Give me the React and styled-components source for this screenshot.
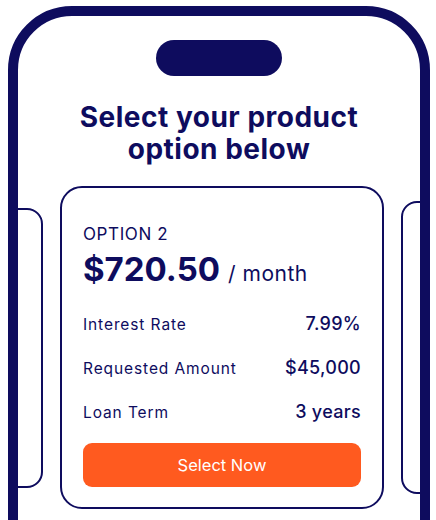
import styled, { createGlobalStyle } from "styled-components";

const navy = "#0e0c5e";
const orange = "#ff5a1f";

const GlobalStyle = createGlobalStyle`
    html, body {
        margin: 0;
        padding: 0;
        background: #fff;
        overflow: hidden;
    }
    * {
        box-sizing: border-box;
    }
`

const Page = styled.div`
    height: 520px;
    overflow: hidden;
    padding: 6px 6px 0 8px;
    font-family: Inter, "Noto Sans", sans-serif;
    color: ${navy};
`

const Phone = styled.div`
    height: 620px;
    border: 10px solid ${navy};
    border-radius: 64px 64px 0 0;
    display: flex;
    flex-direction: column;
    align-items: center;
    overflow: hidden;
`

const Notch = styled.div`
    width: 126px;
    height: 36px;
    margin-top: 24px;
    border-radius: 18px;
    background: ${navy};
`

const Title = styled.h1`
    margin: 25px 0 0;
    font-size: 28px;
    line-height: 32px;
    font-weight: 700;
    text-align: center;
    letter-spacing: 0.5px;
`

const Carousel = styled.div`
    display: flex;
    align-items: center;
    justify-content: center;
    gap: 17px;
    margin-top: 21px;
    padding-left: 6px;
`

const SideCard = styled.div`
    flex: none;
    width: 324px;
    height: ${p => p.$h}px;
    border: 2px solid ${navy};
    border-radius: 16px;
`

const Card = styled.div`
    flex: none;
    width: 324px;
    padding: 36px 21px 20px;
    border: 2px solid ${navy};
    border-radius: 22px;
`

const OptionLabel = styled.div`
    font-size: 17px;
    line-height: 20px;
    font-weight: 400;
    letter-spacing: 0.6px;
`

const Price = styled.div`
    display: flex;
    align-items: baseline;
    gap: 8px;
    margin-top: 6px;
`

const Amount = styled.span`
    font-size: 33px;
    line-height: 39px;
    font-weight: 700;
`

const Period = styled.span`
    font-size: 21px;
    font-weight: 400;
    letter-spacing: 0.5px;
`

const Details = styled.div`
    margin-top: 13px;
    display: flex;
    flex-direction: column;
`

const Row = styled.div`
    display: flex;
    justify-content: space-between;
    align-items: baseline;
    height: 44px;
    line-height: 44px;
`

const Label = styled.span`
    font-size: 15.5px;
    font-weight: 400;
    letter-spacing: 0.9px;
`

const Value = styled.span`
    font-size: 18px;
    font-weight: 500;
    letter-spacing: 0.3px;
`

const Button = styled.button`
    display: block;
    width: 100%;
    height: 44px;
    margin-top: 9px;
    border: none;
    border-radius: 9px;
    background: ${orange};
    color: #fff;
    font-family: inherit;
    font-size: 16.5px;
    font-weight: 400;
    cursor: pointer;
`

const details = [
    { label: "Interest Rate", value: "7.99%" },
    { label: "Requested Amount", value: "$45,000" },
    { label: "Loan Term", value: "3 years" },
]

export default function App() {
    return (
        <>
            <GlobalStyle />
            <Page>
                <Phone>
                    <Notch />
                    <Title>Select your product<br />option below</Title>
                    <Carousel>
                        <SideCard $h={280} />
                        <Card>
                            <OptionLabel>OPTION 2</OptionLabel>
                            <Price>
                                <Amount>$720.50</Amount>
                                <Period>/ month</Period>
                            </Price>
                            <Details>
                                {details.map(d => (
                                    <Row key={d.label}>
                                        <Label>{d.label}</Label>
                                        <Value>{d.value}</Value>
                                    </Row>
                                ))}
                            </Details>
                            <Button>Select Now</Button>
                        </Card>
                        <SideCard $h={293} />
                    </Carousel>
                </Phone>
            </Page>
        </>
    )
}
